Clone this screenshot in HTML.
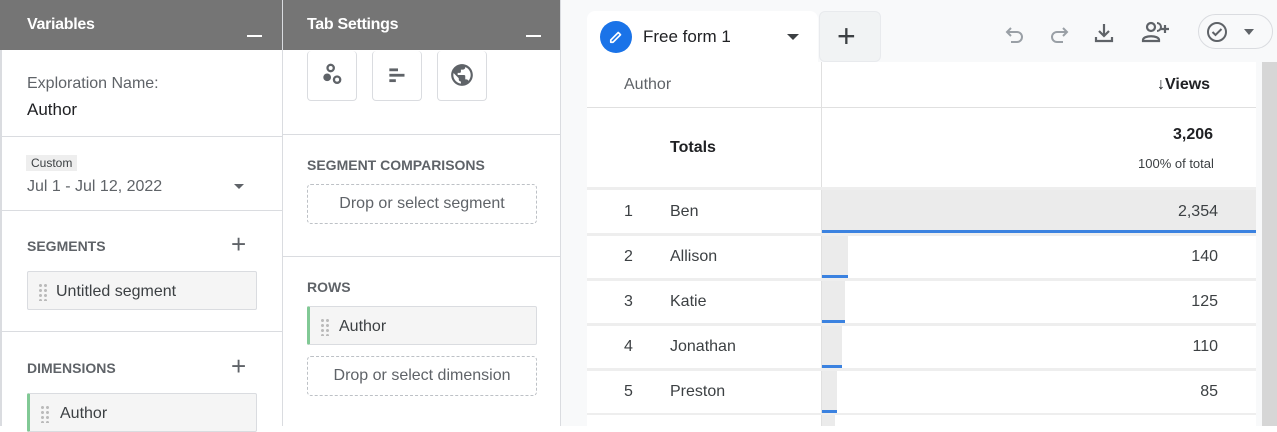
<!DOCTYPE html>
<html><head><meta charset="utf-8"><style>
*{box-sizing:border-box;margin:0;padding:0}
body{width:1277px;height:426px;overflow:hidden;font-family:"Liberation Sans",sans-serif;background:#fff;position:relative;color:#202124}
.a{position:absolute}
.hd{background:#757575;color:#fff;font-weight:bold;font-size:16px;height:50px;top:0}
.hd span{position:absolute;left:27px;top:16px;letter-spacing:-0.3px}
.hd i{position:absolute;right:20px;top:35px;width:15px;height:2px;background:#fff}
.hl{height:1px;background:#dadce0}
.lab{font-size:14px;color:#5f6368;font-weight:bold;letter-spacing:0}
.plus{font-size:26px;color:#5f6368;font-weight:300}
.chip{background:#f5f5f5;border:1px solid #dadce0;border-radius:2px;height:39px;font-size:16px;color:#3c4043}
.grip{position:absolute;left:10px;top:11px;width:10px;height:18px;background:radial-gradient(circle,#bbb 1.4px,transparent 1.6px) 0 0/5px 5px}
.dash{border:1px dashed #bdc1c6;border-radius:4px;height:40px;font-size:16px;color:#5f6368;text-align:center;line-height:38px}
.ib{width:50px;height:50px;border:1px solid #dadce0;border-radius:4px;top:51px;border-top:none}
.sep{left:587px;width:669px;height:3px;background:#eeeeee}
.t{font-size:16px;color:#3c4043}
</style></head><body>
<div class="a hd" style="left:0;width:282px"><span>Variables</span><i></i></div>
<div class="a" style="left:0;top:50px;width:2px;height:376px;background:#dadce0"></div>
<div class="a" style="left:282px;top:0;width:1px;height:426px;background:#dadce0"></div>
<div class="a" style="left:27px;top:75px;font-size:16px;color:#5f6368">Exploration Name:</div>
<div class="a" style="left:27px;top:100px;font-size:17px;color:#202124">Author</div>
<div class="a hl" style="left:0;top:136px;width:282px"></div>
<div class="a" style="left:26px;top:155px;background:#eeeeee;font-size:12px;padding:1px 5px;color:#3c4043">Custom</div>
<div class="a" style="left:27px;top:178px;font-size:16px;color:#5f6368">Jul 1 - Jul 12, 2022</div>
<div class="a" style="left:234px;top:184px;border:5px solid transparent;border-top:5px solid #5f6368"></div>
<div class="a hl" style="left:0;top:210px;width:282px"></div>
<div class="a lab" style="left:27px;top:238px">SEGMENTS</div>
<div class="a plus" style="left:231px;top:229px">+</div>
<div class="a chip" style="left:27px;top:271px;width:230px"><div class="grip"></div><span class="a" style="left:28px;top:11px">Untitled segment</span></div>
<div class="a hl" style="left:0;top:331px;width:282px"></div>
<div class="a lab" style="left:27px;top:360px">DIMENSIONS</div>
<div class="a plus" style="left:231px;top:351px">+</div>
<div class="a chip" style="left:27px;top:393px;width:230px;border-left:3px solid #81c995"><div class="grip"></div><span class="a" style="left:30px;top:11px">Author</span></div>
<div class="a hd" style="left:283px;width:278px"><span style="left:24px">Tab Settings</span><i></i></div>
<div class="a" style="left:560px;top:0;width:1px;height:426px;background:#dadce0"></div>
<div class="a ib" style="left:307px"><svg class="a" style="left:11px;top:10px" width="28" height="28" viewBox="0 0 24 24"><circle cx="10" cy="6" r="2.7" fill="none" stroke="#5f6368" stroke-width="2"/><circle cx="7" cy="14" r="3.3" fill="#5f6368"/><circle cx="15.5" cy="16" r="2.7" fill="none" stroke="#5f6368" stroke-width="2"/></svg></div>
<div class="a ib" style="left:372px"><svg class="a" style="left:12px;top:12px" width="26" height="26" viewBox="0 0 24 24"><rect x="4" y="5" width="8" height="2.6" fill="#5f6368"/><rect x="4" y="10" width="14" height="2.6" fill="#5f6368"/><rect x="4" y="15" width="6" height="2.6" fill="#5f6368"/></svg></div>
<div class="a ib" style="left:437px"><svg class="a" style="left:11px;top:11px" width="26" height="26" viewBox="0 0 24 24"><path fill="#5f6368" d="M12 2C6.48 2 2 6.480 2 12s4.48 10 10 10 10-4.48 10-10S17.52 2 12 2zm-1 17.93c-3.950-.49-7-3.85-7-7.93 0-.62.08-1.21.21-1.790L9 15v1c0 1.1.9 2 2 2v1.93zm6.9-2.54c-.26-.81-1-1.39-1.9-1.39h-1v-3c0-.55-.45-1-1-1H8v-2h2c.55 0 1-.45 1-1V7h2c1.1 0 2-.9 2-2v-.41c2.930 1.19 5 4.06 5 7.41 0 2.08-.8 3.97-2.1 5.39z"/></svg></div>
<div class="a hl" style="left:283px;top:134px;width:277px"></div>
<div class="a lab" style="left:307px;top:157px">SEGMENT COMPARISONS</div>
<div class="a dash" style="left:307px;top:184px;width:230px">Drop or select segment</div>
<div class="a hl" style="left:283px;top:256px;width:277px"></div>
<div class="a lab" style="left:307px;top:279px">ROWS</div>
<div class="a chip" style="left:307px;top:306px;width:230px;border-left:3px solid #81c995"><div class="grip"></div><span class="a" style="left:29px;top:11px">Author</span></div>
<div class="a dash" style="left:307px;top:356px;width:230px">Drop or select dimension</div>
<div class="a" style="left:561px;top:0;width:716px;height:426px;background:#f8f9fa"></div>
<div class="a" style="left:587px;top:11px;width:231px;height:55px;background:#fff;border-radius:8px 8px 0 0"></div>
<div class="a" style="left:600px;top:21px;width:32px;height:32px;border-radius:50%;background:#1a73e8"><svg class="a" style="left:7px;top:7px" width="18" height="18" viewBox="0 0 24 24"><path d="M5 19 L5 16 L15 6 L18 9 L8 19 Z" fill="none" stroke="#fff" stroke-width="2.2" stroke-linejoin="round"/></svg></div>
<div class="a" style="left:643px;top:27px;font-size:17px;color:#202124">Free form 1</div>
<div class="a" style="left:787px;top:34px;border:6px solid transparent;border-top:6px solid #3c4043"></div>
<div class="a" style="left:819px;top:11px;width:62px;height:51px;background:#f1f3f4;border-radius:6px;border:1px solid #e8eaed"></div>
<div class="a" style="left:837px;top:18px;font-size:32px;color:#3c4043;font-weight:300">+</div>
<svg class="a" style="left:1003px;top:23px" width="24" height="24" viewBox="0 0 24 24"><path d="M8 5 L4 9 L8 13 M4 9 H14 a5 5 0 0 1 0 10 H8" fill="none" stroke="#9aa0a6" stroke-width="2"/></svg>
<svg class="a" style="left:1047px;top:23px" width="24" height="24" viewBox="0 0 24 24"><path d="M16 5 L20 9 L16 13 M20 9 H10 a5 5 0 0 0 0 10 H16" fill="none" stroke="#9aa0a6" stroke-width="2"/></svg>
<svg class="a" style="left:1092px;top:21px" width="24" height="24" viewBox="0 0 24 24"><path d="M12 3 V15 M7 10 L12 15 L17 10 M4 16 V20 H20 V16" fill="none" stroke="#5f6368" stroke-width="2.2"/></svg>
<svg class="a" style="left:1140px;top:19px" width="32" height="26" viewBox="0 0 32 26"><circle cx="11" cy="8" r="4" fill="none" stroke="#5f6368" stroke-width="2.2"/><path d="M3 21 c0-5 16-5 16 0 V22 H3 Z" fill="none" stroke="#5f6368" stroke-width="2.2"/><path d="M17 4 a4 4 0 0 1 0 8" fill="none" stroke="#5f6368" stroke-width="2"/><path d="M25 6 V14 M21 10 H29" stroke="#5f6368" stroke-width="2.2"/></svg>
<div class="a" style="left:1198px;top:14px;width:75px;height:35px;border:1px solid #dadce0;border-radius:18px;background:#f8f9fa"></div>
<svg class="a" style="left:1205px;top:20px" width="24" height="24" viewBox="0 0 24 24"><circle cx="12" cy="12" r="9" fill="none" stroke="#5f6368" stroke-width="2"/><path d="M7.5 12 L10.5 15 L16.5 9" fill="none" stroke="#5f6368" stroke-width="2"/></svg>
<div class="a" style="left:1244px;top:29px;border:5px solid transparent;border-top:6px solid #5f6368"></div>
<div class="a" style="left:587px;top:62px;width:669px;height:364px;background:#fff"></div>
<div class="a" style="left:1262px;top:62px;width:15px;height:364px;background:#d6d6d6"></div>
<div class="a" style="left:821px;top:62px;width:1px;height:364px;background:#e0e0e0"></div>
<div class="a" style="left:624px;top:76px;font-size:16px;color:#5f6368">Author</div>
<div class="a" style="left:1157px;top:76px;font-size:16px;font-weight:bold;color:#202124">↓Views</div>
<div class="a hl" style="left:587px;top:107px;width:669px;background:#e0e0e0"></div>
<div class="a" style="left:670px;top:139px;font-size:16px;font-weight:bold;color:#202124">Totals</div>
<div class="a" style="left:1173px;top:126px;font-size:16px;font-weight:bold;color:#202124">3,206</div>
<div class="a" style="left:1138px;top:156px;font-size:13px;color:#3c4043">100% of total</div>
<div class="a sep" style="top:187px"></div>
<div class="a" style="left:822px;top:190px;width:434px;height:40px;background:#ebebeb"></div>
<div class="a" style="left:822px;top:230px;width:434px;height:3px;background:#3b82e0"></div>
<div class="a sep" style="top:233px"></div>
<div class="a" style="left:822px;top:236px;width:26px;height:40px;background:#ebebeb"></div><div class="a" style="left:822px;top:275px;width:26px;height:3px;background:#3b82e0"></div>
<div class="a sep" style="top:278px"></div>
<div class="a" style="left:822px;top:281px;width:23px;height:40px;background:#ebebeb"></div><div class="a" style="left:822px;top:320px;width:23px;height:3px;background:#3b82e0"></div>
<div class="a sep" style="top:323px"></div>
<div class="a" style="left:822px;top:326px;width:20px;height:40px;background:#ebebeb"></div><div class="a" style="left:822px;top:365px;width:20px;height:3px;background:#3b82e0"></div>
<div class="a sep" style="top:368px"></div>
<div class="a" style="left:822px;top:371px;width:15px;height:40px;background:#ebebeb"></div><div class="a" style="left:822px;top:410px;width:15px;height:3px;background:#3b82e0"></div>
<div class="a sep" style="top:413px;height:2px"></div>
<div class="a" style="left:822px;top:415px;width:13px;height:11px;background:#ebebeb"></div>
<div class="a t" style="left:624px;top:203px">1</div><div class="a t" style="left:670px;top:203px">Ben</div><div class="a t" style="left:1170px;top:203px;width:48px;text-align:right">2,354</div>
<div class="a t" style="left:624px;top:248px">2</div><div class="a t" style="left:670px;top:248px">Allison</div><div class="a t" style="left:1170px;top:248px;width:48px;text-align:right">140</div>
<div class="a t" style="left:624px;top:293px">3</div><div class="a t" style="left:670px;top:293px">Katie</div><div class="a t" style="left:1170px;top:293px;width:48px;text-align:right">125</div>
<div class="a t" style="left:624px;top:338px">4</div><div class="a t" style="left:670px;top:338px">Jonathan</div><div class="a t" style="left:1170px;top:338px;width:48px;text-align:right">110</div>
<div class="a t" style="left:624px;top:383px">5</div><div class="a t" style="left:670px;top:383px">Preston</div><div class="a t" style="left:1170px;top:383px;width:48px;text-align:right">85</div>
</body></html>
